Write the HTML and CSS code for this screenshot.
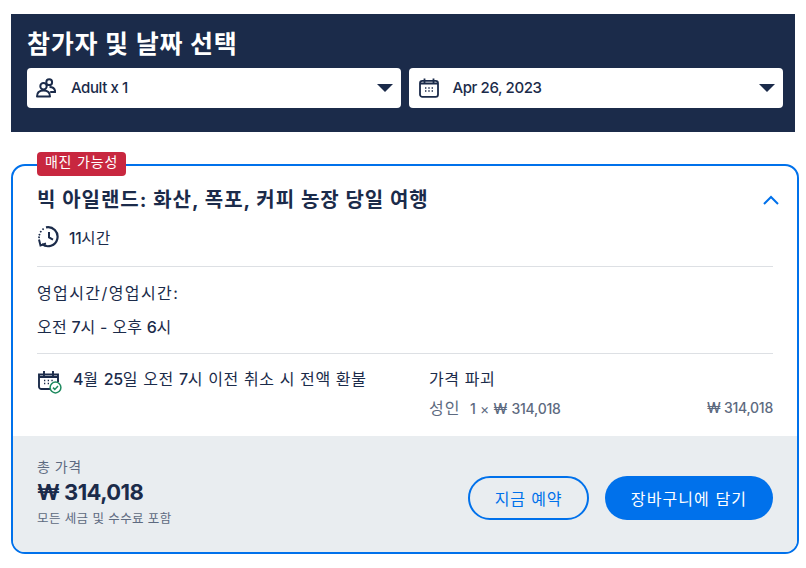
FILE: index.html
```html
<!DOCTYPE html>
<html lang="ko">
<head>
<meta charset="utf-8">
<title>참가자 및 날짜 선택</title>
<link rel="stylesheet" href="styles.css">
</head>
<body>
<header class="picker">
  <h1 class="picker-title">참가자 및 날짜 선택</h1>
  <div class="picker-row">
    <div class="select">
      <svg class="select-icon" viewBox="0 0 20 20" width="20" height="20" fill="none" stroke="#1b2b4a" stroke-width="2"><circle cx="7.5" cy="8.2" r="3.2"/><circle cx="13.2" cy="4.2" r="2.9"/><path d="M1 18.5c0-4 2.4-6 6.5-6s6.5 2 6.5 6z" stroke-linejoin="round"/><path d="M13.5 9c3.3 0 5.5 1.6 5.7 5h-5" stroke-linejoin="round"/></svg>
      <span class="select-text">Adult x 1</span>
      <span class="caret"></span>
    </div>
    <div class="select select-date">
      <svg class="select-icon" viewBox="0 0 20 20" width="20" height="20" fill="none" stroke="#1b2b4a" stroke-width="1.8"><rect x="1" y="2.8" width="18" height="16" rx="2.4"/><path d="M5.5 0.5v4M14.5 0.5v4M1 5.5h18"/><path d="M6 10h1.4M9.3 10h1.4M12.6 10h1.4M6 13h1.4M9.3 13h1.4M12.6 13h1.4" stroke-width="1.5"/></svg>
      <span class="select-text">Apr 26, 2023</span>
      <span class="caret"></span>
    </div>
  </div>
</header>

<section class="card">
  <span class="badge">매진 가능성</span>
  <div class="card-body">
    <div class="title-row">
      <h2 class="card-title">빅 아일랜드: 화산, 폭포, 커피 농장 당일 여행</h2>
      <svg class="chevron" viewBox="0 0 16 10" width="16" height="10" fill="none" stroke="#0071eb" stroke-width="2"><path d="M1 9l7-7 7 7"/></svg>
    </div>
    <div class="duration">
      <svg viewBox="0 0 22 22" width="22" height="22" fill="none" stroke="#1b2b4a" stroke-width="2.2"><path d="M8 1.4A9.5 9.5 0 1 1 4 18" /><path d="M11 6v5.5l4 2.2" stroke-width="2"/><path d="M1 13.5l1.5 6 5.5-2" stroke-width="2"/><path d="M5 3.1l.1.1M2.7 5.6l.1.1M1.4 8.6l.1.1M1 11.2l.1.1" stroke-linecap="round" stroke-width="1.8"/></svg>
      <span><span class="num">11</span>시간</span>
    </div>
    <hr class="rule rule-first">
    <p class="hours-label">영업시간/영업시간:</p>
    <p class="hours-value">오전 <span class="num">7</span>시 - 오후 <span class="num">6</span>시</p>
    <hr class="rule rule-second">
    <div class="details">
      <div class="refund">
        <svg viewBox="0 0 24 24" width="24" height="24" fill="none"><g stroke="#1b2b4a" stroke-width="1.9"><path d="M13 19H3.5A2.3 2.3 0 0 1 1 16.7V4.5h19V12"/><path d="M6 1v5M15 1v5M1 7h19" /><path d="M6 10.5h1.3M9.7 10.5H11M13.4 10.5h1.3M6 13.5h1.3M9.7 13.5H11" stroke-width="1.5"/></g><circle cx="17.5" cy="17.5" r="5.4" fill="#fff" stroke="#1f8a5f" stroke-width="1.5"/><path d="M15 17.6l1.8 1.8 3.2-3.3" stroke="#1f8a5f" stroke-width="1.5"/></svg>
        <span><span class="num">4</span>월 <span class="num">25</span>일 오전 <span class="num">7</span>시 이전 취소 시 전액 환불</span>
      </div>
      <div class="breakdown">
        <div class="breakdown-title">가격 파괴</div>
        <div class="breakdown-row">
          <span class="breakdown-left"><span class="breakdown-name">성인</span> 1 <span class="times">×</span> ₩ 314,018</span>
          <span>₩ 314,018</span>
        </div>
      </div>
    </div>
  </div>
  <footer class="card-foot">
    <div class="total">
      <div class="total-label">총 가격</div>
      <div class="total-price">₩ 314,018</div>
      <div class="total-note">모든 세금 및 수수료 포함</div>
    </div>
    <div class="actions">
      <button class="btn btn-outline" type="button">지금 예약</button>
      <button class="btn btn-solid" type="button">장바구니에 담기</button>
    </div>
  </footer>
</section>
</body>
</html>
```
FILE: styles.css
```css
* { box-sizing: border-box; }
html, body { margin: 0; background: #fff; }
body {
  padding: 14px 7px 0 11px;
  font-family: "Inter", "Noto Sans CJK KR", sans-serif;
  color: #1b2b4a;
  font-size: 15px;
}
.picker {
  margin-right: 4px;
  height: 118px;
  background: #1b2b4a;
  padding: 15px 12px 0 16px;
}
.picker-title {
  margin: 0;
  height: 39px;
  font-size: 25px;
  line-height: 30px;
  font-weight: 700;
  letter-spacing: 0.8px;
  color: #fff;
}
.picker-row { display: flex; gap: 8px; }
.select {
  flex: 1;
  height: 40px;
  background: #fff;
  border-radius: 4px;
  display: flex;
  align-items: center;
  padding: 0 8px 0 9px;
}
.select-date { padding-left: 10px; }
.select-date .select-text { margin-left: 14px; }
.select-icon { flex: none; }
.select-text { flex: 1; margin-left: 15px; padding-bottom: 2px; font-size: 15px; font-weight: 500; letter-spacing: -0.4px; }
.caret {
  width: 0;
  height: 0;
  border-left: 8px solid transparent;
  border-right: 8px solid transparent;
  border-top: 8px solid #1b2b4a;
}
.card {
  position: relative;
  margin-top: 32px;
  height: 390px;
  border: 2px solid #0071eb;
  border-radius: 14px;
  display: flex;
  flex-direction: column;
}
.badge {
  position: absolute;
  left: 24px;
  top: -14px;
  width: 89px;
  height: 24px;
  background: #c8273f;
  color: #fff;
  border-radius: 4px;
  font-size: 14px;
  line-height: 20px;
  letter-spacing: 0.8px;
  text-align: center;
}
.card-body { flex: 1; padding: 20px 24px 0; }
.title-row { display: flex; justify-content: space-between; align-items: center; height: 28px; margin-right: -6px; }
.card-title { margin: 0; font-size: 20px; line-height: 28px; font-weight: 700; letter-spacing: 1px; }
.chevron { flex: none; }
.duration { display: flex; align-items: center; gap: 9px; margin-top: 11px; height: 24px; font-size: 15.5px; letter-spacing: 0.4px; }
.duration svg { flex: none; margin-left: 1px; }
.num { font-weight: 500; letter-spacing: -0.3px; }
.rule { margin: 0; border: 0; height: 1px; background: #dde0e4; }
.rule-first { margin-top: 17px; }
.hours-label { margin: 15px 0 0; font-size: 16px; line-height: 22px; letter-spacing: 1.4px; }
.hours-value { margin: 12px 0 0; font-size: 16px; line-height: 22px; letter-spacing: 0.2px; }
.rule-second { margin-top: 15px; }
.details { display: flex; margin-top: 14px; }
.refund { width: 392px; display: flex; gap: 11px; font-size: 16px; line-height: 22px; letter-spacing: 0.6px; }
.refund svg { flex: none; margin-top: 2px; margin-left: 1px; }
.breakdown { flex: 1; }
.breakdown-title { font-size: 16px; line-height: 22px; letter-spacing: 0.6px; }
.breakdown-row { display: flex; justify-content: space-between; margin-top: 8px; font-size: 14px; line-height: 20px; color: #5d6a80; font-weight: 500; letter-spacing: -0.25px; }
.breakdown-left { word-spacing: 1px; }
.breakdown-name { font-size: 16px; font-weight: 400; margin-right: 5px; letter-spacing: 1px; }
.times { font-weight: 400; }
.card-foot {
  flex: none;
  height: 116px;
  background: #e9edf0;
  border-radius: 0 0 12px 12px;
  padding: 0 24px;
  display: flex;
  justify-content: space-between;
  align-items: flex-start;
}
.total { padding-top: 22px; }
.total-label { font-size: 14px; line-height: 18px; color: #5d6a80; letter-spacing: 0.5px; }
.total-price { font-size: 22px; line-height: 28px; margin-top: 2px; font-weight: 700; letter-spacing: -0.55px; }
.total-note { font-size: 12.5px; line-height: 18px; color: #5d6a80; margin-top: 4px; letter-spacing: 0.4px; }
.actions { display: flex; gap: 16px; padding-top: 40px; }
.btn {
  height: 44px;
  border-radius: 22px;
  font-family: inherit;
  font-size: 16px;
  padding: 0;
}
.btn-outline { width: 121px; background: transparent; border: 2px solid #0071eb; color: #0071eb; letter-spacing: 0.8px; }
.btn-solid { width: 168px; background: #0071eb; border: 0; color: #fff; letter-spacing: 1.1px; }
```
